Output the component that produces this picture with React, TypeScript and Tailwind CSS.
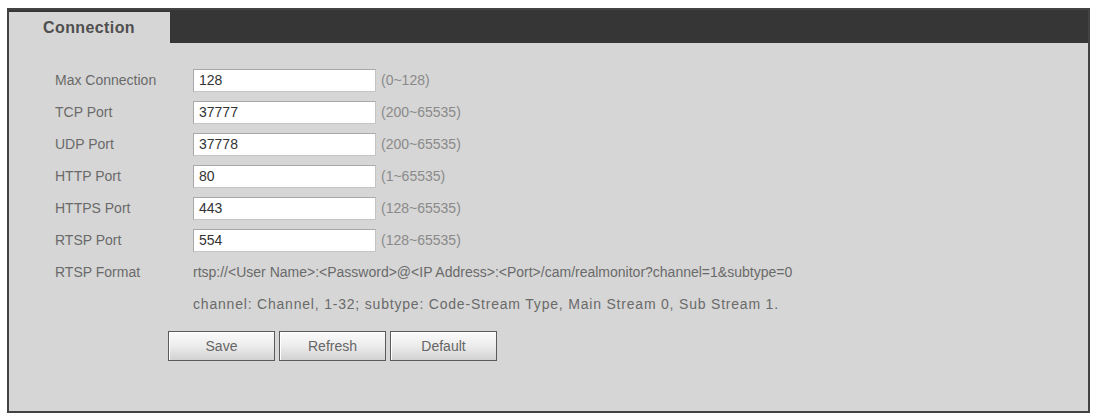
const rows = [
  { label: "Max Connection", value: "128", hint: "(0~128)" },
  { label: "TCP Port", value: "37777", hint: "(200~65535)" },
  { label: "UDP Port", value: "37778", hint: "(200~65535)" },
  { label: "HTTP Port", value: "80", hint: "(1~65535)" },
  { label: "HTTPS Port", value: "443", hint: "(128~65535)" },
  { label: "RTSP Port", value: "554", hint: "(128~65535)" },
];

function PanelButton({ children }: { children: string }) {
  return (
    <button className="h-[30px] w-[107px] border border-[#5a5a5a] bg-gradient-to-b from-[#fbfbfb] via-[#ececec] to-[#d2d2d2] text-[14px] text-[#666] shadow-[inset_1px_1px_0_#fff]">
      {children}
    </button>
  );
}

export default function App() {
  return (
    <div
      className="h-[415px] w-[1095px] bg-white pl-[7px] pt-[8px]"
      style={{ fontFamily: '"Liberation Sans", Arial, sans-serif' }}
    >
      <div className="flex h-[405px] w-[1083px] flex-col border-2 border-[#434343] bg-[#d6d6d6]">
        <div className="flex h-[33px] items-end bg-[#363636]">
          <div className="flex h-[31px] w-[161px] items-center bg-[#d6d6d6] pl-[34px] text-[16px] font-bold tracking-[0.4px] text-[#4f4f4f]">
            Connection
          </div>
        </div>

        <div className="flex flex-col pl-[46px] pt-[21px] text-[14px] text-[#6a6a6a]">
          {rows.map((row) => (
            <div key={row.label} className="flex h-[32px] items-center">
              <div className="w-[138px]">{row.label}</div>
              <div className="flex h-[23px] w-[183px] items-center border border-[#c4c4c4] border-t-[#a8a8a8] border-l-[#a8a8a8] bg-white pl-[5px] text-[14px] text-[#333]">
                {row.value}
              </div>
              <div className="pl-[5px] text-[#8a8a8a]">{row.hint}</div>
            </div>
          ))}

          <div className="flex h-[32px] items-center">
            <div className="w-[138px]">RTSP Format</div>
            <div>
              rtsp://&lt;User Name&gt;:&lt;Password&gt;@&lt;IP Address&gt;:&lt;Port&gt;/cam/realmonitor?channel=1&amp;subtype=0
            </div>
          </div>

          <div className="flex h-[32px] items-center pl-[138px]">
            <div className="tracking-[0.8px]">
              channel: Channel, 1-32; subtype: Code-Stream Type, Main Stream 0, Sub Stream 1.
            </div>
          </div>

          <div className="flex gap-[4px] pl-[113px] pt-[11px]">
            <PanelButton>Save</PanelButton>
            <PanelButton>Refresh</PanelButton>
            <PanelButton>Default</PanelButton>
          </div>
        </div>
      </div>
    </div>
  );
}
